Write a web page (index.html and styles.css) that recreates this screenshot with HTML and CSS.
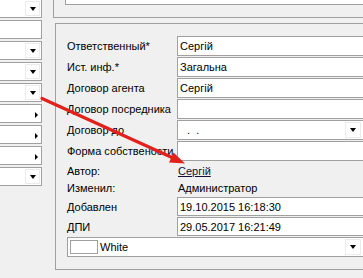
FILE: index.html
```html
<!DOCTYPE html>
<html>
<head>
<meta charset="utf-8">
<link rel="stylesheet" href="styles.css">
</head>
<body>
<div class="app">
  <div class="left">
    <div class="lrow"><span class="lbtn"><i class="down"></i></span></div>
    <div class="lrow"></div>
    <div class="lrow"><span class="lbtn"><i class="down"></i></span></div>
    <div class="lrow"><span class="lbtn"><i class="down"></i></span></div>
    <div class="lrow"><span class="lbtn"><i class="down"></i></span></div>
    <div class="lrow"><span class="lbtn small"><i class="right"></i></span></div>
    <div class="lrow"><span class="lbtn small"><i class="right"></i></span></div>
    <div class="lrow"><span class="lbtn small"><i class="right"></i></span></div>
    <div class="lrow"><span class="lbtn"><i class="down"></i></span></div>
  </div>
  <div class="main">
    <div class="toppanel"><div class="topfield"></div></div>
    <div class="group">
      <div class="row"><span class="lbl">Ответственный*</span><span class="field">Сергій</span></div>
      <div class="row"><span class="lbl">Ист. инф.*</span><span class="field">Загальна</span></div>
      <div class="row"><span class="lbl">Договор агента</span><span class="field">Сергій</span></div>
      <div class="row"><span class="lbl">Договор посредника</span><span class="field"></span></div>
      <div class="row"><span class="lbl">Договор до</span><span class="field"><span class="mask">.&nbsp;&nbsp;.</span><span class="dbtn"><i class="down"></i></span></span></div>
      <div class="row"><span class="lbl">Форма собствености</span><span class="field"></span></div>
      <div class="trow"><span class="lbl">Автор:</span><a class="link">Сергій</a></div>
      <div class="trow"><span class="lbl">Изменил:</span><span class="val">Администратор</span></div>
      <div class="row drow"><span class="lbl">Добавлен</span><span class="field">19.10.2015 16:18:30</span></div>
      <div class="row drow"><span class="lbl">ДПИ</span><span class="field">29.05.2017 16:21:49</span></div>
      <div class="row wrow"><span class="field"><span class="swatch"></span><span class="wtext">White</span><span class="dbtn"><i class="down"></i></span></span></div>
    </div>
  </div>
</div>
<svg class="arrow" width="363" height="278" viewBox="0 0 363 278">
  <line x1="42" y1="98.5" x2="172" y2="157.5" stroke="#e3201b" stroke-width="3.2" stroke-linecap="round"/>
  <polygon points="185,163.5 169,162.5 173.5,152.5" fill="#e3201b"/>
</svg>
</body>
</html>
```

FILE: styles.css
```css
html, body {
  margin: 0;
  padding: 0;
}
body {
  width: 363px;
  height: 278px;
  overflow: hidden;
  position: relative;
  background: #f0f0f0;
  font-family: "Liberation Sans", Arial, sans-serif;
  font-size: 11px;
  color: #000;
}
.app {
  display: flex;
  width: 380px;
  height: 278px;
}
.left {
  width: 42px;
  flex: none;
  display: flex;
  flex-direction: column;
  gap: 2px;
  margin-top: -1px;
}
.lrow {
  height: 19px;
  box-sizing: border-box;
  border: 1px solid #a0a0a0;
  border-left: none;
  background: #fff;
  display: flex;
  justify-content: flex-end;
}
.lbtn {
  width: 15px;
  margin: 1px;
  box-sizing: border-box;
  border: 1px solid #ececec;
  display: flex;
  align-items: center;
  justify-content: center;
}
.lbtn.small {
  width: 8px;
  border: none;
  padding-top: 3px;
}
.down {
  display: block;
  width: 0;
  height: 0;
  border-left: 3.5px solid transparent;
  border-right: 3.5px solid transparent;
  border-top: 4px solid #000;
}
.right {
  display: block;
  width: 0;
  height: 0;
  border-top: 3px solid transparent;
  border-bottom: 3px solid transparent;
  border-left: 3px solid #000;
}
.main {
  flex: none;
  width: 327px;
  margin-left: 11px;
  display: flex;
  flex-direction: column;
}
.toppanel {
  height: 18px;
  box-sizing: border-box;
  border-left: 1px solid #a0a0a0;
  border-bottom: 1px solid #a0a0a0;
  padding-left: 11px;
}
.topfield {
  height: 5px;
  box-sizing: border-box;
  border-left: 1px solid #a0a0a0;
  border-bottom: 1px solid #a0a0a0;
  background: #fff;
}
.group {
  margin-top: 5px;
  margin-left: 2px;
  height: 247px;
  box-sizing: border-box;
  border: 1px solid #a0a0a0;
  border-right: none;
  padding: 12px 16px 0 10px;
}
.row {
  display: flex;
  align-items: center;
  height: 20px;
  margin-bottom: 1px;
}
.lbl {
  width: 111px;
  flex: none;
  white-space: nowrap;
  padding-left: 1px;
  box-sizing: border-box;
}
.field {
  flex: 1;
  height: 100%;
  box-sizing: border-box;
  border: 1px solid #a0a0a0;
  background: #fff;
  padding-left: 2px;
  display: flex;
  align-items: center;
  white-space: nowrap;
}
.mask {
  padding-left: 7px;
}
.dbtn {
  margin-left: auto;
  margin-right: 2px;
  width: 16px;
  height: 16px;
  box-sizing: border-box;
  border: 1px solid #ececec;
  display: flex;
  align-items: center;
  justify-content: center;
}
.trow {
  display: flex;
  align-items: center;
  height: 17px;
}
.trow + .trow {
  margin-bottom: 1px;
}
.link {
  color: #10103a;
  text-decoration: underline;
  padding-left: 1px;
}
.val {
  padding-left: 1px;
}
.drow {
  height: 19px;
}
.wrow {
  height: 20px;
  padding-left: 1px;
}
.swatch {
  width: 28px;
  height: 14px;
  box-sizing: border-box;
  border: 1px solid #a0a0a0;
  background: #fff;
  flex: none;
}
.wtext {
  margin-left: 2px;
}
.arrow {
  position: absolute;
  left: 0;
  top: 0;
  pointer-events: none;
}
```
